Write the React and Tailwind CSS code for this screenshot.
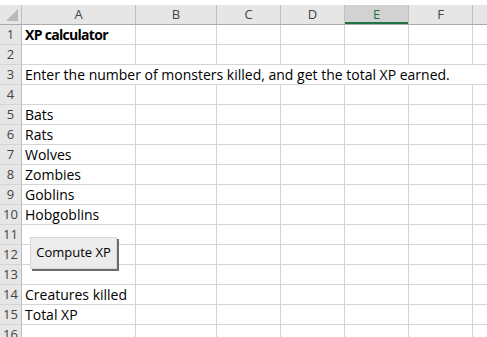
import React from "react";

const cols = ["A", "B", "C", "D", "E", "F"];
const widths = ["w-[114px]", "w-[81px]", "w-[64px]", "w-[64px]", "w-[64px]", "w-[64px]"];

const rows = [
  { n: 1, text: "XP calculator", bold: true },
  { n: 2 },
  { n: 3, text: "Enter the number of monsters killed, and get the total XP earned.", span: true },
  { n: 4 },
  { n: 5, text: "Bats" },
  { n: 6, text: "Rats" },
  { n: 7, text: "Wolves" },
  { n: 8, text: "Zombies" },
  { n: 9, text: "Goblins" },
  { n: 10, text: "Hobgoblins" },
  { n: 11 },
  { n: 12 },
  { n: 13 },
  { n: 14, text: "Creatures killed" },
  { n: 15, text: "Total XP" },
  { n: 16 },
];

const Row = ({ row }) => (
  <div className="flex h-[20px] shrink-0">
    <div className="w-[22px] shrink-0 flex items-center justify-center bg-[#e6e6e6] border-r border-r-[#bdbdbd] border-b border-b-[#d4d4d4] text-[13px] text-[#444] leading-none">
      {row.n}
    </div>
    {row.span ? (
      <div className="flex-1 flex items-center pl-[3px] border-b border-[#d4d4d4] whitespace-nowrap text-[14px] text-black">
        {row.text}
      </div>
    ) : (
      <>
        {cols.map((c, i) => (
          <div
            key={c}
            className={`${widths[i]} shrink-0 flex items-center pl-[3px] border-r border-b border-[#d4d4d4] whitespace-nowrap text-black ${
              row.bold && i === 0 ? "font-bold text-[14px] tracking-[-0.7px]" : "text-[14px]"
            }`}
          >
            {i === 0 ? row.text : null}
          </div>
        ))}
        <div className="flex-1 border-b border-[#d4d4d4]" />
      </>
    )}
  </div>
);

export default function App() {
  return (
    <div className="relative w-[487px] h-[337px] overflow-hidden bg-white font-['Open_Sans',sans-serif]">
      <div className="h-[5px] bg-white" />
      {/* column headers */}
      <div className="flex h-[20px] bg-[#e6e6e6] border-b border-[#ababab]">
        <div className="relative w-[22px] shrink-0 border-r border-[#bdbdbd]">
          <div className="absolute right-[3px] bottom-[3px] w-0 h-0 border-l-[12px] border-l-transparent border-b-[12px] border-b-[#b9b9b9]" />
        </div>
        {cols.map((c, i) => (
          <div
            key={c}
            className={`${widths[i]} shrink-0 flex items-center justify-center border-r border-[#c0c0c0] text-[13px] leading-none ${
              c === "E" ? "bg-[#d2d2d2] text-[#217346] shadow-[inset_0_-2px_0_#217346]" : "text-[#444]"
            }`}
          >
            {c}
          </div>
        ))}
        <div className="flex-1" />
      </div>
      {rows.map((r) => (
        <Row key={r.n} row={r} />
      ))}
      <button className="absolute left-[30px] top-[237px] w-[87px] h-[32px] bg-[#ececec] border border-[#d8d8d8] shadow-[2px_2px_0_#6b6b6b] text-[13px] text-black font-['Open_Sans',sans-serif] flex items-center justify-center">
        Compute XP
      </button>
    </div>
  );
}
